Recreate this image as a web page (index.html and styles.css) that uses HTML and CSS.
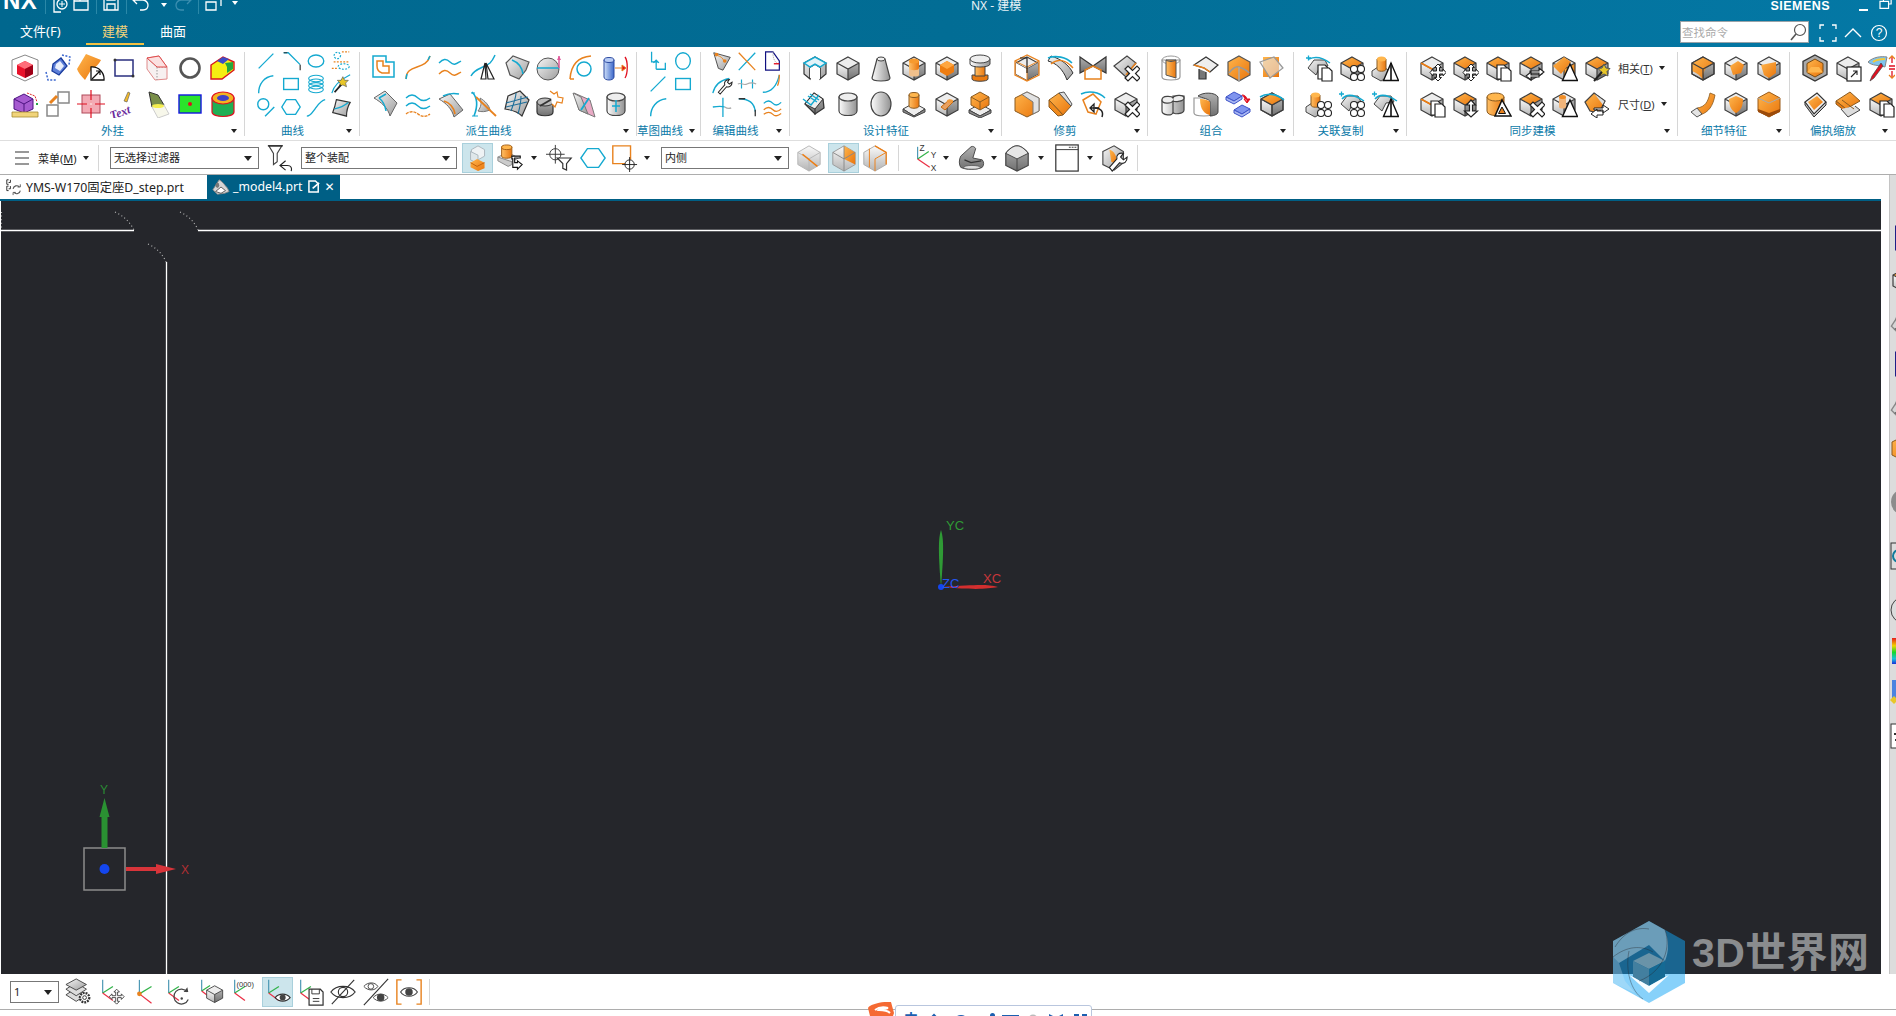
FILE: index.html
```html
<!DOCTYPE html>
<html lang="zh">
<head>
<meta charset="utf-8">
<title>NX - 建模</title>
<link rel="stylesheet" href="styles.css">
</head>
<body>
<svg class="sprite" aria-hidden="true">
<defs>
<linearGradient id="gg" x1="0" y1="0" x2="0" y2="1"><stop offset="0" stop-color="#fafafa"/><stop offset="1" stop-color="#b4b4b4"/></linearGradient>
<linearGradient id="gd" x1="0" y1="0" x2="0" y2="1"><stop offset="0" stop-color="#b0b0b0"/><stop offset="1" stop-color="#707070"/></linearGradient>
<linearGradient id="go" x1="0" y1="0" x2="1" y2="1"><stop offset="0" stop-color="#ffb64d"/><stop offset="1" stop-color="#e9750c"/></linearGradient>
<linearGradient id="gc" x1="0" y1="0" x2="1" y2="0"><stop offset="0" stop-color="#fdfdfd"/><stop offset="1" stop-color="#929292"/></linearGradient>
<linearGradient id="gco" x1="0" y1="0" x2="1" y2="0"><stop offset="0" stop-color="#ffc066"/><stop offset="1" stop-color="#e8760e"/></linearGradient>
<linearGradient id="gb" x1="0" y1="0" x2="1" y2="0"><stop offset="0" stop-color="#cfe0fa"/><stop offset="1" stop-color="#3b67c9"/></linearGradient>
<linearGradient id="gs" x1="0" y1="0" x2="1" y2="1"><stop offset="0" stop-color="#f7f7f7"/><stop offset="1" stop-color="#9c9c9c"/></linearGradient>
<linearGradient id="grb" x1="0" y1="0" x2="0" y2="1"><stop offset="0" stop-color="#e51c1c"/><stop offset=".3" stop-color="#f0d400"/><stop offset=".55" stop-color="#19d829"/><stop offset=".8" stop-color="#19c0e0"/><stop offset="1" stop-color="#1a2fd8"/></linearGradient>

<g id="sd"><polygon points="3,9 14,15 14,26 3,20" fill="url(#gg)"/><polygon points="25,9 14,15 14,26 25,20" fill="url(#gd)"/></g>
<path id="ed" d="M14 3 25 9v11l-11 6L3 20V9zM3 9l11 6 11-6M14 15v11" fill="none" stroke="#3e3e3e" stroke-width="1.2"/>
<g id="c0"><polygon points="14,3 25,9 14,15 3,9" fill="#ededed"/><use href="#sd"/><use href="#ed"/></g>
<g id="co"><polygon points="14,3 25,9 14,15 3,9" fill="url(#go)"/><use href="#sd"/><use href="#ed"/></g>
<g id="ce"><polygon points="14,3 25,9 14,15 3,9" fill="#ededed"/><use href="#sd"/><use href="#ed"/><path d="M3 9l11 6" stroke="#ee7d11" stroke-width="1.8"/></g>
<g id="cf"><polygon points="14,3 25,9 14,15 3,9" fill="#ddd"/><polygon points="3,9 14,15 14,26 3,20" fill="url(#go)"/><polygon points="25,9 14,15 14,26 25,20" fill="url(#gd)"/><use href="#ed"/></g>
<g id="cr"><polygon points="14,3 25,9 14,15 3,9" fill="#e6e6e6"/><polygon points="3,9 14,15 14,26 3,20" fill="url(#gg)"/><polygon points="25,9 14,15 14,26 25,20" fill="url(#go)"/><use href="#ed"/></g>
<g id="cy"><path d="M5 7v14c0 6 18 6 18 0V7z" fill="url(#gc)" stroke="#444" stroke-width="1.2"/><ellipse cx="14" cy="7" rx="9" ry="4" fill="#eee" stroke="#444" stroke-width="1.2"/></g>
<g id="cyo"><path d="M3 7v14c0 6 17 6 17 0V7z" fill="url(#gco)" stroke="#8a5a20"/><ellipse cx="11.500" cy="7" rx="8.500" ry="4" fill="#ffb64d" stroke="#8a5a20"/></g>
<path id="oMove" d="M20 10l3.500 3.500H21.500V17h3.500v-2l3 3.500-3 3.500v-2h-3.500v3.500h2L20 27l-3.500-3.500h2V20H15v2l-3-3.500 3-3.500v2h3.500v-3.500h-2z" fill="#fff" stroke="#222"/>
<g id="oCopy"><path d="M13 11h7l3 3v11H13z" fill="#fff" stroke="#222" stroke-width="1.2"/><path d="M17 14h7l3 3v10H17z" fill="#fff" stroke="#222" stroke-width="1.2"/></g>
<g id="oTri"><path d="M20 10 27.500 26.500H12.500z" fill="#fff" stroke="#111" stroke-width="1.4"/></g>
<g id="oTri2"><path d="M20 9 27.500 26.500H12.500z" fill="#fff" stroke="#111" stroke-width="1.4"/><path d="M20 9v17.500" stroke="#111" stroke-width="1.6"/></g>
<path id="oX" d="M13 15l3-3 4.500 4.500L25 12l3 3-4.500 4.500L28 24l-3 3-4.500-4.500L16 27l-3-3 4.500-4.500z" fill="#fff" stroke="#222" stroke-width="1.2"/>
<g id="oStar"><path d="M21 10l2 4 4 .5-3 3 1 4.500-4-2-4 2 1-4.500-3-3 4-.5z" fill="#e8c628" stroke="#555"/><path d="M11 27l8-9" stroke="#222" stroke-width="2"/></g>
<g id="oUp"><path d="M20 10l4.500 5h-3v6h5L20 27l-6.500-6h5v-6h-3z" fill="#fff" stroke="#222" stroke-width="1.200"/></g>
<g id="o4"><g fill="#fff" stroke="#222" stroke-width="1.100"><circle cx="16" cy="15" r="3.500"/><circle cx="23" cy="15" r="3.500"/><circle cx="16" cy="23" r="3.500"/><circle cx="23" cy="23" r="3.500"/></g></g>
<path id="plus" d="M1 4h5M3.500 1.500v5" stroke="#14a9d0" stroke-width="1.300"/>
<path id="bow" d="M4 9C9 3 17 5 26 11" fill="none" stroke="#14a9d0" stroke-width="1.500"/>
<g id="csys" fill="none" stroke-width="1.300"><path d="M5 2v14" stroke="#4e99b5"/><path d="M5 16l11-7" stroke="#32b34a"/><path d="M5 16l11 8" stroke="#ea2f44"/></g>

<symbol id="p1" viewBox="0 0 28 28"><path d="M14 1 27 6v15l-13 6-13-6V6z" fill="none" stroke="#888"/><path d="M14 7 22 11v9l-8 4-8-4v-9z" fill="#e8122b"/><path d="M14 7 22 11l-8 4-8-4z" fill="#ff6d7a"/><path d="M14 15v9l8-4v-9z" fill="#9e0018"/></symbol>
<symbol id="p2" viewBox="0 0 28 28"><path d="M9 10l8-6 6 8-8 9-7-4z" fill="#5d7fd8" stroke="#183a9c" stroke-width="1.300"/><path d="M12 10l4-3 4 5-4 5-5-3z" fill="#e8eefc"/><path d="M18 1l8 2-1 8M2 18l2 8 8 0" fill="none" stroke="#3d68cf" stroke-width="1.500" stroke-dasharray="2 1.500"/></symbol>
<symbol id="p3" viewBox="0 0 28 28"><path d="M9 0 24 6C21 12 17 14 14 16L8 26C4 22 1 18 0 15z" fill="url(#go)"/><path d="M14 26V13a12 12 0 0 1 13 13z" fill="#fff" stroke="#111" stroke-width="1.300"/><path d="M15 25l8-8M19 17h4v4" fill="none" stroke="#111" stroke-width="1.200"/></symbol>
<symbol id="p4" viewBox="0 0 28 28"><rect x="5" y="6" width="18" height="16" fill="#fff" stroke="#2a2f7f" stroke-width="1.500"/><circle cx="5" cy="6" r="1.500" fill="#333"/><circle cx="23" cy="22" r="1.500" fill="#333"/></symbol>
<symbol id="p5" viewBox="0 0 28 28"><path d="M4 4 16 2l8 11v12L12 26 4 15z" fill="#f7f0f0" stroke="#e08a8a"/><path d="M4 4l10 9h10M14 13v13" fill="none" stroke="#999" stroke-dasharray="1.500 1.500"/><path d="M4 4 16 2l8 11-10 0z" fill="#fbe0e0" stroke="#df4a4a"/></symbol>
<symbol id="p6" viewBox="0 0 28 28"><circle cx="14" cy="14" r="9.500" fill="none" stroke="#555" stroke-width="2.600"/></symbol>
<symbol id="p7" viewBox="0 0 28 28"><path d="M2 11 14 3l11 5v8L13 25H2z" fill="#f5ee12" stroke="#d8141c" stroke-width="1.400"/><path d="M8 7 14 3l6 2-6 5z" fill="#3b4cc8"/><path d="M16 9l8-1v7l-6 4v-6z" fill="#23a83e"/></symbol>
<symbol id="p8" viewBox="0 0 28 28"><path d="M3 9 13 4l9 5v10l-9 4-10-4z" fill="#a65bd0" stroke="#4c1480"/><path d="M3 9l10 5 9-5M13 14v9" fill="none" stroke="#4c1480"/><path d="M1 22h26v5H1z" fill="#f1d47a" stroke="#a68b30" stroke-width=".8"/><path d="M16 3l8 3 2 6" fill="none" stroke="#e02b2b" stroke-dasharray="2 1"/><path d="M25 13l2 2m0-2-2 2" stroke="#28a745"/></symbol>
<symbol id="p9" viewBox="0 0 28 28"><rect x="14" y="2" width="11" height="11" fill="#fff" stroke="#888" stroke-width="1.500"/><rect x="3" y="15" width="11" height="11" fill="#fff" stroke="#888" stroke-width="1.500"/><path d="M6 13l7-7" stroke="#e8821e" stroke-width="3"/></symbol>
<symbol id="p10" viewBox="0 0 28 28"><rect x="5" y="5" width="18" height="18" fill="#f3aab4" stroke="#b04a5a"/><path d="M14 0v28M0 14h28" stroke="#e01020" stroke-width="1.200"/><path d="M14 10v8M10 14h8" stroke="#fff"/></symbol>
<symbol id="p11" viewBox="0 0 28 28"><text class="svg-tex" x="-1" y="25" transform="rotate(-20 14 20)">Text</text><path d="M14 11l4-9 2 1-3 9z" fill="#f0b92c" stroke="#555" stroke-width=".6"/></symbol>
<symbol id="p12" viewBox="0 0 28 28"><path d="M6 2 15 5 21 15 9 17z" fill="#7a8f4a" stroke="#333"/><path d="M9 17l12-2 5 9-11 4z" fill="#f7f7ea" stroke="#ccc"/><ellipse cx="15" cy="16" rx="6" ry="2" fill="#f5ee50"/></symbol>
<symbol id="p13" viewBox="0 0 28 28"><rect x="3" y="5" width="22" height="18" fill="#2be32b" stroke="#1414e0" stroke-width="1.400"/><circle cx="14" cy="14" r="2" fill="#e01020"/></symbol>
<symbol id="p14" viewBox="0 0 28 28"><path d="M3 8v14c0 6 22 6 22 0V8z" fill="#1faf54" stroke="#e01020" stroke-width="1.200"/><ellipse cx="14" cy="8" rx="11" ry="6" fill="#f3b320" stroke="#e01020" stroke-width="1.200"/><ellipse cx="14" cy="8" rx="6" ry="3" fill="#4040c8"/></symbol>

<symbol id="k1" viewBox="0 0 24 24"><path d="M4 20 20 4" stroke="#14a9d0" stroke-width="1.400"/></symbol>
<symbol id="k2" viewBox="0 0 24 24"><path d="M4 3h5l13 13" fill="none" stroke="#14a9d0" stroke-width="1.400"/><path d="M4 3h4M22 16v6" stroke="#333" stroke-width="1.300"/></symbol>
<symbol id="k3" viewBox="0 0 24 24"><ellipse cx="12" cy="12" rx="8.500" ry="6.500" fill="none" stroke="#14a9d0" stroke-width="1.500"/></symbol>
<symbol id="k4" viewBox="0 0 24 24"><g fill="none" stroke-dasharray="2 1.500" stroke-width="1.300"><circle cx="8" cy="6" r="3.500" stroke="#14a9d0"/><ellipse cx="15" cy="18" rx="6" ry="3" stroke="#14a9d0"/><path d="M4 13h16M13 2h8M2 20h6" stroke="#e8821e"/></g></symbol>
<symbol id="k5" viewBox="0 0 24 24"><path d="M4 22C4 12 10 4 20 3" fill="none" stroke="#14a9d0" stroke-width="1.500"/></symbol>
<symbol id="k6" viewBox="0 0 24 24"><rect x="4" y="6" width="16" height="12" fill="none" stroke="#14a9d0" stroke-width="1.500"/></symbol>
<symbol id="k7" viewBox="0 0 24 24"><g fill="none" stroke="#14a9d0" stroke-width="1.200"><ellipse cx="12" cy="6" rx="8" ry="3.500"/><ellipse cx="12" cy="10" rx="8" ry="3.500"/><ellipse cx="12" cy="14" rx="8" ry="3.500"/><ellipse cx="12" cy="18" rx="8" ry="3.500"/></g></symbol>
<symbol id="k8" viewBox="0 0 24 24"><path d="M2 22c2-8 8-14 20-20" fill="none" stroke="#14a9d0" stroke-width="1.300"/><path d="M14 4l2 4 4 0-3 3 1 4-4-2-4 2 1-4-3-3 4 0z" fill="#e8c628" stroke="#555" stroke-width=".7"/><path d="M5 21l7-8" stroke="#222" stroke-width="2"/></symbol>
<symbol id="k9" viewBox="0 0 24 24"><circle cx="9" cy="9" r="6" fill="none" stroke="#14a9d0" stroke-width="1.500"/><path d="M11 22 21 12" stroke="#14a9d0" stroke-width="1.500"/></symbol>
<symbol id="k10" viewBox="0 0 24 24"><path d="M7 4h10l5 8-5 8H7l-5-8z" fill="none" stroke="#14a9d0" stroke-width="1.500"/></symbol>
<symbol id="k11" viewBox="0 0 24 24"><path d="M2 22c4 0 6-4 9-8s6-9 11-10" fill="none" stroke="#14a9d0" stroke-width="1.500"/></symbol>
<symbol id="k12" viewBox="0 0 24 24"><path d="M7 4l15 3c-3 5-4 9-4 15L3 18C5 13 6 9 7 4z" fill="url(#gs)" stroke="#333" stroke-width="1.300"/><path d="M5 14c5-1 10-3 15-7" fill="none" stroke="#14a9d0" stroke-width="1.500"/></symbol>

<symbol id="d1" viewBox="0 0 28 28"><path d="M2 2h13l0 6 8 0v15H2z" fill="none" stroke="#14a9d0" stroke-width="1.500"/><path d="M6 7h6v5l6 0v7H11c-3-1-5-3-5-7z" fill="none" stroke="#e8821e" stroke-width="1.500"/></symbol>
<symbol id="d2" viewBox="0 0 28 28"><path d="M2 25c0-8 5-10 11-12S24 9 26 2" fill="none" stroke="#e8821e" stroke-width="1.500"/><path d="M2 25 3 20" stroke="#14a9d0" stroke-width="1.500"/><path d="M24 6l2-4" stroke="#14a9d0" stroke-width="1.500"/></symbol>
<symbol id="d3" viewBox="0 0 28 28"><path d="M2 9c4-4 7-5 11-1s6 2 11-1" fill="none" stroke="#14a9d0" stroke-width="1.400"/><path d="M2 20c4-4 7-5 11-1s6 2 11-1" fill="none" stroke="#e8821e" stroke-width="1.400"/></symbol>
<symbol id="d4" viewBox="0 0 28 28"><path d="M1 22C5 14 14 14 20 9 23 6 24 3 25 1" fill="none" stroke="#14a9d0" stroke-width="1.500"/><path d="M11 25 15 9l1 16zM16 9l8 16h-6z" fill="#fff" stroke="#222" stroke-width="1.200"/></symbol>
<symbol id="d5" viewBox="0 0 28 28"><path d="M3 9 10 2l16 6-3 8-7 9L7 21z" fill="url(#gs)" stroke="#555" stroke-width="1.200"/><path d="M9 6c5 2 10 7 11 14" fill="none" stroke="#14a9d0" stroke-width="1.600"/></symbol>
<symbol id="d6" viewBox="0 0 28 28"><circle cx="12" cy="15" r="11" fill="url(#gs)" stroke="#555"/><path d="M1 14h22" stroke="#14a9d0" stroke-width="1.500"/><path d="M23 2v12" stroke="#e0589a" stroke-width="1.500"/><path d="M21 6l2-4 2 4z" fill="#e0589a"/></symbol>
<symbol id="d7" viewBox="0 0 28 28"><path d="M1 25C2 11 9 3 22 2" fill="none" stroke="#e8821e" stroke-width="1.500"/><path d="M1 25h4" stroke="#e8821e" stroke-width="1.500"/><circle cx="15" cy="15" r="7" fill="none" stroke="#14a9d0" stroke-width="1.500"/></symbol>
<symbol id="d8" viewBox="0 0 28 28"><path d="M2 6v17c0 4 10 4 10 0V6z" fill="url(#gb)" stroke="#2c4aa0"/><ellipse cx="7" cy="6" rx="5" ry="2.500" fill="#b7ccf5" stroke="#2c4aa0"/><path d="M13 14h7M20 11l4 3-4 3z" stroke="#e8821e" fill="#e01020"/><path d="M23 3c3 4 3 16 0 21" fill="none" stroke="#e01020" stroke-width="1.300"/></symbol>
<symbol id="d9" viewBox="0 0 28 28"><path d="M3 8 14 1l12 12-7 13C17 18 10 12 3 8z" fill="url(#gs)" stroke="#666"/><path d="M8 8l7-4M8 8c4 3 6 7 7 13" fill="none" stroke="#14a9d0" stroke-width="1.500"/></symbol>
<symbol id="d10" viewBox="0 0 28 28"><path d="M2 8c4-4 8-4 12 0s8 3 12 0" fill="none" stroke="#14a9d0" stroke-width="1.400"/><path d="M2 16c4-4 8-4 12 0s8 3 12 0" fill="none" stroke="#14a9d0" stroke-width="1.400"/><path d="M2 24c4-3 8-3 12 0s8 3 12 0" fill="none" stroke="#e8821e" stroke-width="1.400" stroke-dasharray="3 1"/></symbol>
<symbol id="d11" viewBox="0 0 28 28"><path d="M2 9l11-5 13 16-9 7C15 19 9 13 2 9z" fill="url(#gs)" stroke="#666"/><path d="M6 6C12 3 17 3 22 4" fill="none" stroke="#14a9d0" stroke-width="1.500"/><path d="M7 11c6 2 10 7 11 13" fill="none" stroke="#e8821e" stroke-width="1.800"/></symbol>
<symbol id="d12" viewBox="0 0 28 28"><path d="M10 8c5 3 9 7 10 12-5 2-8 2-12 1 3-4 4-8 2-13z" fill="url(#gs)" stroke="#777"/><path d="M2 2c6 6 6 14 2 24" fill="none" stroke="#14a9d0" stroke-width="1.600"/><path d="M1 3h4M2 26h6" stroke="#14a9d0"/><path d="M6 7 26 26" stroke="#e8821e" stroke-width="1.800"/></symbol>
<symbol id="d13" viewBox="0 0 28 28"><path d="M5 6 17 1l9 9-7 16C15 22 9 20 2 19z" fill="url(#gs)" stroke="#333" stroke-width="1.200"/><path d="M3 13 25 7M8 21C11 13 13 7 13 3M15 24c2-7 3-12 3-18M3 17l21-5" fill="none" stroke="#1d6e99" stroke-width="1.100"/></symbol>
<symbol id="d14" viewBox="0 0 28 28"><path d="M1 12v10c0 5 16 5 16 0V12z" fill="url(#gd)" stroke="#333" stroke-width="1.200"/><ellipse cx="9" cy="12" rx="8" ry="4" fill="#bbb" stroke="#333"/><path d="M4 16 16 9" stroke="#333" stroke-width="2"/><path d="M14 1l4 3 3-2 1 5 5 1-1 5-5-1-2 5-3-3" fill="#fff" stroke="#e8821e" stroke-width="1.200"/></symbol>
<symbol id="d15" viewBox="0 0 28 28"><path d="M5 3 21 10l5 17L10 20z" fill="#e9aac5" stroke="#777"/><path d="M4 3l8 4 7 17-9-4z" fill="url(#gs)" stroke="#777"/><path d="M20 8l-8 12" stroke="#14a9d0" stroke-width="1.800"/></symbol>
<symbol id="d16" viewBox="0 0 28 28"><use href="#cy"/><path d="M14 10v12M10 16h8" stroke="#14a9d0" stroke-width="1.500"/></symbol>

<symbol id="e1" viewBox="0 0 24 24"><path d="M5 2v11h7" fill="none" stroke="#14a9d0" stroke-width="1.400"/><path d="M10 21V11M7 14l3-3 3 3" fill="none" stroke="#14a9d0" stroke-width="1.400"/><path d="M10 21h10V14" fill="none" stroke="#14a9d0" stroke-width="1.400"/></symbol>
<symbol id="e2" viewBox="0 0 24 24"><ellipse cx="12" cy="12" rx="8" ry="9" fill="none" stroke="#14a9d0" stroke-width="1.500"/></symbol>
<symbol id="e4" viewBox="0 0 24 24"><path d="M4 22c0-9 6-18 17-19" fill="none" stroke="#14a9d0" stroke-width="1.500"/></symbol>
<symbol id="f1" viewBox="0 0 24 24"><path d="M3 3 21 8 13 22 8 20z" fill="url(#gs)" stroke="#444"/><path d="M7 6c4 1 6 3 7 6" fill="none" stroke="#e8821e"/><circle cx="6" cy="5" r="2" fill="#e8821e"/><circle cx="15" cy="12" r="2" fill="#e8821e"/></symbol>
<symbol id="f2" viewBox="0 0 24 24"><path d="M3 22 21 3" stroke="#14a9d0" stroke-width="1.400"/><path d="M3 3l18 19" stroke="#e8821e" stroke-width="1.400"/></symbol>
<symbol id="f3" viewBox="0 0 24 24"><path d="M5 2h8l7 10v10H5z" fill="#fff" stroke="#101080" stroke-width="1.300"/><path d="M13 2c0 6 1 10 5 13" fill="none" stroke="#aaa" stroke-dasharray="1.500 1"/><path d="M14 15h6" stroke="#e01020" stroke-width="1.500"/></symbol>
<symbol id="f4" viewBox="0 0 24 24"><path d="M2 22C4 13 9 8 20 6" fill="none" stroke="#14a9d0" stroke-width="1.400"/><path d="M8 21l7-8c-1-3 1-6 5-6l-2 3 2 2 3-2c0 4-3 6-6 5l-7 8z" fill="#fff" stroke="#222" stroke-width="1.100"/></symbol>
<symbol id="f5" viewBox="0 0 24 24"><path d="M6 7v10M18 7v10" stroke="#14a9d0" stroke-width="1.300"/><path d="M2 12c4-2 6 2 10 0s6-2 10 0" fill="none" stroke="#aaa" stroke-width="1.200"/></symbol>
<symbol id="f6" viewBox="0 0 24 24"><path d="M2 21c9 0 15-6 18-19" fill="none" stroke="#14a9d0" stroke-width="1.400"/><path d="M20 2c0 6-1 10-2 12" fill="none" stroke="#e8821e" stroke-width="1.400"/></symbol>
<symbol id="f7" viewBox="0 0 24 24"><path d="M13 2v21" stroke="#14a9d0" stroke-width="1.400"/><path d="M2 12c6-1 10-1 13 0" fill="none" stroke="#14a9d0" stroke-width="1.400"/><path d="M15 12c3 2 5 2 7 1" fill="none" stroke="#aaa" stroke-width="1.400"/></symbol>
<symbol id="f8" viewBox="0 0 24 24"><path d="M3 3c10 0 17 4 18 14" fill="none" stroke="#14a9d0" stroke-width="1.400"/><path d="M3 3h7M21 15v7" stroke="#333" stroke-width="1.400"/></symbol>
<symbol id="f9" viewBox="0 0 24 24"><path d="M3 8c4-4 7-3 10 0s6 2 9-1" fill="none" stroke="#14a9d0" stroke-width="1.400"/><path d="M3 15c4-4 7-3 10 0s6 2 9-1M3 20c4-3 7-3 10 0s6 1 9-1" fill="none" stroke="#e8821e" stroke-width="1.400"/></symbol>

<symbol id="g1" viewBox="0 0 28 28"><path d="M3 9 14 3l11 6v11l-6 5V14l-5-3-5 3v11l-6-5z" fill="url(#gs)" stroke="#333" stroke-width="1.200"/><path d="M9 14v11M19 14v11" fill="none" stroke="#333"/><path d="M9 14v10l10 1V14l-5-3z" fill="#fff"/><path d="M3 9l6 4 5-3 5 3 6-4-11-6z" fill="#e3f3f8" stroke="#14a9d0" stroke-width="1.500"/></symbol>
<symbol id="g2" viewBox="0 0 28 28"><use href="#c0"/></symbol>
<symbol id="g3" viewBox="0 0 28 28"><path d="M10 5 5 24c0 4 18 4 18 0L18 5z" fill="url(#gc)" stroke="#444" stroke-width="1.200"/><ellipse cx="14" cy="5" rx="4" ry="2" fill="#eee" stroke="#444"/></symbol>
<symbol id="g4" viewBox="0 0 28 28"><use href="#c0"/><path d="M9 11v10c0 2 10 2 10 0V11z" fill="#f0c08c"/><path d="M9 7v7c0 3 10 3 10 0V7z" fill="url(#gco)"/><ellipse cx="14" cy="7" rx="5" ry="2.500" fill="#f79a2e"/></symbol>
<symbol id="g5" viewBox="0 0 28 28"><use href="#c0"/><path d="M14 7 21 11v7l-7 4-7-4v-7z" fill="#ee7d11"/><path d="M7 11l7 4 7-4-7-4z" fill="#ffa640"/></symbol>
<symbol id="g6" viewBox="0 0 28 28"><path d="M6 21h16v4c0 3-16 3-16 0z" fill="#ea7a10" stroke="#444"/><path d="M9 10h10v12H9z" fill="url(#gco)" stroke="#444"/><path d="M4 5v5c0 4 20 4 20 0V5z" fill="url(#gc)" stroke="#444"/><ellipse cx="14" cy="5" rx="10" ry="4" fill="#eee" stroke="#444"/></symbol>
<symbol id="g7" viewBox="0 0 28 28"><path d="M4 14 14 24l9-6-1-9L13 3z" fill="url(#gd)" stroke="#333" stroke-width="1.300"/><path d="M4 14 13 3l9 6L14 19z" fill="#eee" stroke="#333"/><path d="M14 19v6" stroke="#333"/><path d="M2 9l8 6 8-10M7 6l9 6M9 4l9 6" fill="none" stroke="#14a9d0" stroke-width="1.400"/></symbol>
<symbol id="g8" viewBox="0 0 28 28"><use href="#cy"/></symbol>
<symbol id="g9" viewBox="0 0 28 28"><ellipse cx="14" cy="14" rx="10" ry="12" fill="url(#gc)" stroke="#444" stroke-width="1.200"/></symbol>
<symbol id="g10" viewBox="0 0 28 28"><path d="M14 13 25 19l-11 7-11-7z" fill="#eee" stroke="#444"/><path d="M3 19v3l11 5 11-5v-3l-11 7z" fill="#888" stroke="#444"/><path d="M9 5v11c0 3 10 3 10 0V5z" fill="url(#gco)" stroke="#8a5a20"/><ellipse cx="14" cy="5" rx="5" ry="2.500" fill="#ffb64d" stroke="#8a5a20"/></symbol>
<symbol id="g11" viewBox="0 0 28 28"><use href="#c0"/><path d="M8 17l8-7 4 2-8 8z" fill="#e8a060" stroke="#c66a10"/><ellipse cx="17" cy="11" rx="3" ry="1.800" fill="#f29a3a"/></symbol>
<symbol id="g12" viewBox="0 0 28 28"><path d="M14 14 25 20l-11 6-11-6z" fill="#eee" stroke="#444"/><path d="M3 20v3l11 5 11-5v-3l-11 6z" fill="#8a8a8a" stroke="#444"/><path d="M14 2 23 7v8l-9 5-9-5V7z" fill="url(#go)" stroke="#8a5a20"/><path d="M5 7l9 5 9-5M14 12v8" fill="none" stroke="#8a5a20"/></symbol>

<symbol id="h1" viewBox="0 0 28 28"><use href="#c0"/><polygon points="25,9 14,15 14,26 25,20" fill="url(#gd)"/><polygon points="3,9 14,15 14,26 3,20" fill="#fff"/><path d="M14 1 2 7v14l12 6 12-6V7z" fill="none" stroke="#e8821e" stroke-width="1.300"/><path d="M2 7l12 6 12-6M14 13v14" fill="none" stroke="#e8821e"/><path d="M7 4h7v15" fill="none" stroke="#222" stroke-width="1.200"/></symbol>
<symbol id="h2" viewBox="0 0 28 28"><path d="M2 7c8 2 15 8 19 19l6-7C23 11 15 5 5 2z" fill="url(#gs)" stroke="#333"/><path d="M5 10C12 4 20 6 27 14" fill="none" stroke="#e8821e" stroke-width="1.400"/><path d="M2 4c8-3 18-1 24 5" fill="none" stroke="#14a9d0" stroke-width="1.600"/></symbol>
<symbol id="h3" viewBox="0 0 28 28"><path d="M1 3 14 12 27 3v16l-13-7L1 19z" fill="url(#gd)" stroke="#333" stroke-width="1.200"/><path d="M14 12l8 4v9H6v-9z" fill="none" stroke="#e8821e" stroke-width="1.500"/></symbol>
<symbol id="h4" viewBox="0 0 28 28"><path d="M2 12 15 2l9 7-6 7-3 8z" fill="url(#gs)" stroke="#444" stroke-width="1.200"/><path d="M14 21 24 9" stroke="#e8821e" stroke-width="1.600"/><use href="#oX"/></symbol>
<symbol id="h5" viewBox="0 0 28 28"><path d="M14 2 26 8v13l-12 6L2 21V8z" fill="url(#go)" stroke="#8a5a20"/><path d="M14 2 26 8v13l-6 3V12L9 4.500z" fill="#e2e2e2" stroke="#777"/></symbol>
<symbol id="h6" viewBox="0 0 28 28"><path d="M3 10 13 3l12 13-8 9z" fill="url(#go)" stroke="#8a5a20"/><path d="M13 3l5-1 8 12-1 2z" fill="#ddd" stroke="#555"/><path d="M3 10l14 15-5 1-9-9z" fill="#f08a1c" stroke="#8a5a20"/></symbol>
<symbol id="h7" viewBox="0 0 28 28"><path d="M2 4C10 0 20 2 26 8" fill="none" stroke="#14a9d0" stroke-width="1.500"/><path d="M4 10 14 4l8 8-5 12-8-2z" fill="#fff" stroke="#e8821e" stroke-width="1.500"/><path d="M11 18h9M11 18l4-4v8z" fill="#fff" stroke="#222" stroke-width="1.300"/><path d="M16 18c5 0 9 3 7 9" fill="none" stroke="#222" stroke-width="1.500"/></symbol>
<symbol id="h8" viewBox="0 0 28 28"><use href="#c0"/><use href="#oX"/></symbol>

<symbol id="j1" viewBox="0 0 28 28"><path d="M3 6v17c0 4 18 4 18 0V6z" fill="none" stroke="#999" stroke-width="1.200"/><ellipse cx="12" cy="6" rx="9" ry="4" fill="none" stroke="#999"/><path d="M7 6v15l10 3V6z" fill="url(#gco)" stroke="#555"/><path d="M7 6c3 2 7 2 10 0" fill="none" stroke="#555"/></symbol>
<symbol id="j2" viewBox="0 0 28 28"><path d="M2 11 14 3l12 8-8 7-6-4z" fill="#eee" stroke="#333" stroke-width="1.200"/><path d="M7 15v10l7 0v-7" fill="#777" stroke="#333" stroke-width="1.200"/><path d="M2 11l10 3 6 4" fill="none" stroke="#e8821e" stroke-width="1.500"/></symbol>
<symbol id="j3" viewBox="0 0 28 28"><path d="M14 2 25 8v13l-11 6L3 21V8z" fill="url(#go)" stroke="#555" stroke-width="1.200"/><path d="M4 19c4-5 7-7 10-6s8 3 10 6" fill="none" stroke="#999" stroke-width="1.500"/><path d="M14 13v14" stroke="#aaa" stroke-width="1.500"/></symbol>
<symbol id="j4" viewBox="0 0 28 28"><path d="M5 3h16v20H5z" fill="url(#go)"/><path d="M2 8l14-5 9 11-13 10z" fill="#e9e9e9" fill-opacity=".6" stroke="#999" stroke-width="1.200"/></symbol>
<symbol id="j5" viewBox="0 0 28 28"><path d="M3 10v11c0 4 11 6 11 1V10zM14 6v16c0 3 11 2 11-2V6z" fill="url(#gc)" stroke="#444" stroke-width="1.200"/><path d="M3 10C3 5 13 6 14 8c1-3 11-4 11 0s-11 4-11 3C12 14 3 14 3 10z" fill="#eee" stroke="#444" stroke-width="1.200"/></symbol>
<symbol id="j6" viewBox="0 0 28 28"><path d="M2 8v15c0 4 20 4 20 0V8z" fill="none" stroke="#999" stroke-width="1.200"/><path d="M6 6c5-4 17-4 20 1v15c0 3-6 4-8 4V12C18 9 10 8 6 6z" fill="url(#gd)" stroke="#444"/><path d="M8 9c4 0 10 1 10 4v12C13 24 8 20 8 9z" fill="url(#go)"/></symbol>
<symbol id="j7" viewBox="0 0 28 28"><g stroke="#3c52c8" fill="#7f94ee"><path d="M1 7 9 2l8 4-8 5z"/><path d="M1 7v3l8 4 8-5V6l-8 5z" fill="#a9b7f2"/><path d="M9 20l8-5 8 4-8 5z"/><path d="M9 20v3l8 4 8-5v-3l-8 5z" fill="#a9b7f2"/></g><path d="M17 5c4 0 5 3 5 7M19 9l3 4 3-4z" fill="#e01020" stroke="#e01020"/></symbol>
<symbol id="j8" viewBox="0 0 28 28"><use href="#c0"/><polygon points="14,3 25,9 14,15 3,9" fill="url(#go)"/><use href="#ed"/><path d="M2 7c6-4 16-4 24 3" fill="none" stroke="#14a9d0" stroke-width="1.600"/></symbol>

<symbol id="l1" viewBox="0 0 28 28"><path d="M3 14 9 6l11 0 3 6-8 1-4 8z" fill="url(#gs)" stroke="#444"/><use href="#plus"/><path d="M4 5c7-3 13-2 21 4" fill="none" stroke="#14a9d0" stroke-width="1.400"/><use href="#oCopy"/></symbol>
<symbol id="l2" viewBox="0 0 28 28"><use href="#co"/><use href="#o4"/></symbol>
<symbol id="l3" viewBox="0 0 28 28"><path d="M1 17 10 11l7 5v7l-7 4-9-5z" fill="url(#gs)" stroke="#444"/><path d="M6 5v10c0 3 9 3 9 0V5z" fill="url(#gco)" stroke="#8a5a20"/><ellipse cx="10.500" cy="5" rx="4.500" ry="2.500" fill="#ffb64d"/><use href="#oTri2"/></symbol>
<symbol id="l4" viewBox="0 0 28 28"><path d="M1 17 10 11l7 5v7l-7 4-9-5z" fill="url(#gs)" stroke="#444"/><path d="M6 5v10c0 3 9 3 9 0V5z" fill="url(#gco)" stroke="#8a5a20"/><ellipse cx="10.500" cy="5" rx="4.500" ry="2.500" fill="#ffb64d"/><use href="#o4"/></symbol>
<symbol id="l5" viewBox="0 0 28 28"><path d="M3 14 9 6l11 0 3 6-8 1-4 8z" fill="url(#gs)" stroke="#444"/><use href="#plus"/><use href="#bow"/><use href="#o4"/></symbol>
<symbol id="l6" viewBox="0 0 28 28"><path d="M3 14 9 6l11 0 3 6-8 1-4 8z" fill="url(#gs)" stroke="#444"/><use href="#plus"/><use href="#bow"/><use href="#oTri2"/></symbol>

<symbol id="m1" viewBox="0 0 28 28"><use href="#ce"/><use href="#oMove"/></symbol>
<symbol id="m2" viewBox="0 0 28 28"><use href="#co"/><use href="#oMove"/></symbol>
<symbol id="m3" viewBox="0 0 28 28"><use href="#co"/><use href="#oCopy"/></symbol>
<symbol id="m4" viewBox="0 0 28 28"><use href="#co"/><path d="M13 17h9v-3l5 4-5 4v-3h-9zM22 21h-8v-3l-5 4 5 4v-3h8z" fill="#fff" stroke="#222" stroke-width="1.100"/></symbol>
<symbol id="m5" viewBox="0 0 28 28"><use href="#cr"/><path d="M3 12 14 3l7 5-10 12z" fill="url(#go)"/><use href="#oTri"/></symbol>
<symbol id="m6" viewBox="0 0 28 28"><use href="#co"/><use href="#oStar"/></symbol>
<symbol id="m7" viewBox="0 0 28 28"><use href="#ce"/><use href="#oCopy"/></symbol>
<symbol id="m8" viewBox="0 0 28 28"><use href="#co"/><use href="#oUp"/></symbol>
<symbol id="m9" viewBox="0 0 28 28"><use href="#cyo"/><path d="M18 10 27 26H11z" fill="#fff" stroke="#111" stroke-width="1.500"/><path d="M18 17l3.500 6.500h-7z" fill="#e8821e" stroke="#111"/></symbol>
<symbol id="m10" viewBox="0 0 28 28"><use href="#co"/><use href="#oX"/></symbol>
<symbol id="m11" viewBox="0 0 28 28"><use href="#c0"/><path d="M9 7v10c0 2 7 2 7 0V7z" fill="#f0b47a"/><ellipse cx="12.500" cy="7" rx="3.500" ry="2" fill="#f08c24"/><use href="#oTri"/></symbol>
<symbol id="m12" viewBox="0 0 28 28"><path d="M2 12 11 3l11 8-6 12-9-2z" fill="url(#go)" stroke="#444" stroke-width="1.200"/><path d="M11 3l11 8-2 4" fill="#ddd" stroke="#444"/><path d="M11 18h9v-3l6 4-6 4v-3h-9zM20 21h-6v-2l-6 5 6 4v-3h6z" fill="#fff" stroke="#222"/></symbol>

<symbol id="n1" viewBox="0 0 28 28"><use href="#c0"/><path d="M3 9l11-6 11 6-7 4c-3 3-4 7-4 13-2-4-6-7-11-9z" fill="url(#go)"/><use href="#ed"/></symbol>
<symbol id="n2" viewBox="0 0 28 28"><use href="#c0"/><path d="M8 12 16 7l6 4-3 8-8 2z" fill="url(#go)"/></symbol>
<symbol id="n3" viewBox="0 0 28 28"><use href="#c0"/><path d="M6 11 21 8v11l-7 5-5-3z" fill="url(#go)"/></symbol>
<symbol id="n4" viewBox="0 0 28 28"><path d="M8 18c8-1 11-6 13-15l5 2c-2 11-6 17-15 20z" fill="url(#go)" stroke="#8a5a20" stroke-width=".8"/><path d="M2 22 8 18l5 6-5 3z" fill="#e4e4e4" stroke="#555"/></symbol>
<symbol id="n5" viewBox="0 0 28 28"><use href="#c0"/><path d="M7 9l7-3 7 3c0 8-3 12-7 14-4-2-7-6-7-14z" fill="url(#go)"/></symbol>
<symbol id="n6" viewBox="0 0 28 28"><path d="M14 2 25 8v13l-11 6L3 21V8z" fill="url(#go)" stroke="#9a5a18"/><path d="M3 8l11 5 11-5" fill="none" stroke="#aaa"/><path d="M3 19l11 4 11-4v3l-11 5-11-5z" fill="#9c4b0a"/></symbol>
<symbol id="q1" viewBox="0 0 28 28"><path d="M14 1 26 7.500v13L14 27 2 20.500v-13z" fill="#aaa" stroke="#333" stroke-width="1.300"/><path d="M14 5 22 9.500v9L14 23 6 18.500v-9z" fill="url(#go)" stroke="#7a4a10"/><path d="M6 18.500 10 13h8l4 5.500" fill="#ffb64d"/></symbol>
<symbol id="q2" viewBox="0 0 28 28"><use href="#c0"/><rect x="13" y="13" width="14" height="14" fill="#fff" stroke="#222" stroke-width="1.200"/><path d="M17 23l6-6M19 17h4v4" fill="none" stroke="#222" stroke-width="1.100"/></symbol>
<symbol id="q3" viewBox="0 0 28 28"><path d="M1 8C6 3 14 2 20 3l-2 10C12 11 5 12 1 8z" fill="#7fc4ee" stroke="#888"/><path d="M6 8c4-3 8-3 12-3" fill="none" stroke="#f0c93c" stroke-width="2"/><path d="M14 9 5 22l-2 5 4-3 9-12z" fill="#e01020" stroke="#444" stroke-width=".7"/><path d="M25 2v7M25 17v7M22 12h6M22 15h6" stroke="#e01020" stroke-width="1.300"/><path d="M22 5l3-3 3 3M22 21l3 3 3-3" fill="none" stroke="#e8821e" stroke-width="1.300"/></symbol>
<symbol id="q4" viewBox="0 0 28 28"><path d="M4 12 16 3l9 9-12 12z" fill="#eee" stroke="#333" stroke-width="1.200"/><path d="M7 12l9-6 6 6-9 8z" fill="url(#go)"/><path d="M4 12v3l9 12 12-12v-3L13 24z" fill="#bbb" stroke="#333"/></symbol>
<symbol id="q5" viewBox="0 0 28 28"><path d="M2 11 16 2l10 9-14 8z" fill="url(#go)" stroke="#8a5a20"/><path d="M2 11l10 8v3L2 14z" fill="#ea7a10" stroke="#8a5a20"/><path d="M7 19l7 8 12-7-5-4" fill="#ddd" stroke="#444"/><path d="M8 10l12 9" stroke="#8a5a20"/></symbol>

<symbol id="t1" viewBox="0 0 30 30"><path d="M3 2h14l-5 8v9l-4 3V10z" fill="#fff" stroke="#444" stroke-width="1.200"/><path d="M2 2h16" stroke="#222" stroke-width="1.300"/><path d="M21 18l-6 5 6 5" fill="none" stroke="#222" stroke-width="1.200"/><path d="M15 23h8c4 0 5 3 4 6" fill="none" stroke="#222" stroke-width="1.200"/></symbol>
<symbol id="t2" viewBox="0 0 30 30"><g fill="#eef2f4" stroke="#a9b5bb"><path d="M15 2l7 4v7l-7 4-7-4V6z"/><path d="M7 8l8 4v9l-8-4z" fill="#dfe7ea"/></g><path d="M14 16l8 4v6l-7 3-8-4v-5z" fill="url(#go)"/><path d="M7 20l7 4 8-4" fill="none" stroke="#c05f0a"/></symbol>
<symbol id="t3" viewBox="0 0 30 30"><path d="M2 14 13 9l11 6-11 6z" fill="#e8e8e8" stroke="#888"/><path d="M2 14v4l11 6 4-2v-3z" fill="#ccc" stroke="#888"/><path d="M6 3v10c0 3 11 3 11 0V3z" fill="url(#gco)" stroke="#a05c14"/><ellipse cx="11.500" cy="3.500" rx="5.500" ry="2.500" fill="#ffb64d" stroke="#a05c14"/><path d="M17 13h9v2h-6v5h3v-2l5 4-5 5v-2h-5v-9h-1z" fill="#fff" stroke="#111" stroke-width="1.200"/></symbol>
<symbol id="t4" viewBox="0 0 30 30"><circle cx="10" cy="11" r="6" fill="none" stroke="#333"/><path d="M10 1v20M0 11h20" stroke="#333"/><path d="M12 15h15l-5 6v7l-4-2v-5z" fill="#fff" stroke="#333" stroke-width="1.300"/></symbol>
<symbol id="t5" viewBox="0 0 30 30"><path d="M9 5h12l7 10-7 10H9L2 15z" fill="none" stroke="#14a9d0" stroke-width="1.500"/></symbol>
<symbol id="t6" viewBox="0 0 30 30"><path d="M20 21H3V2h19v15" fill="none" stroke="#e8821e" stroke-width="1.500"/><circle cx="21" cy="22" r="5" fill="#fff" stroke="#222"/><path d="M21 14v16M13 22h16" stroke="#222"/></symbol>
<symbol id="t7" viewBox="0 0 30 30"><path d="M15 2 27 9v13l-12 7L3 22V9z" fill="url(#gg)" stroke="#b5b5b5"/><path d="M3 9l12 7 12-7M15 16v13" fill="none" stroke="#b5b5b5"/><path d="M8 11l16 13" stroke="#ee7d11" stroke-width="1.600"/></symbol>
<symbol id="t8" viewBox="0 0 30 30"><path d="M15 2 27 9v13l-12 7L3 22V9z" fill="url(#gg)" stroke="#999"/><path d="M15 2 27 9v13l-12-6z" fill="url(#go)"/><path d="M3 9l12 7 12-7M15 16v13M15 2v14" fill="none" stroke="#888"/></symbol>
<symbol id="t9" viewBox="0 0 30 30"><path d="M15 2 27 9v13l-12 7L3 22V9z" fill="url(#gg)" stroke="#aaa"/><path d="M15 2 27 9v13" fill="none" stroke="#ee7d11" stroke-width="1.300"/><path d="M9 5v20M15 16l12-7M15 16v13" fill="none" stroke="#ee7d11"/></symbol>
<symbol id="t10" viewBox="0 0 30 30"><path d="M6 3v13" stroke="#4e99b5" stroke-width="1.300"/><path d="M6 16l12-8" stroke="#32b34a" stroke-width="1.300"/><path d="M6 16l13 9" stroke="#ea2f44" stroke-width="1.300"/><text class="svg-lab" x="8" y="8">Z</text><text class="svg-lab" x="20" y="15">Y</text><text class="svg-lab" x="20" y="29">X</text></symbol>
<symbol id="t11" viewBox="0 0 30 30"><path d="M4 25c-2-3-2-8 0-12L15 3c2-1 4 0 5 2l-3 10 10 2c2 2 2 6 0 8-6 3-17 3-23 0z" fill="url(#gd)" stroke="#444"/><path d="M8 17l7 3 11-2" fill="none" stroke="#333" stroke-width="1.300"/><ellipse cx="16" cy="25" rx="9" ry="2" fill="#ddd" stroke="#555" stroke-width=".8"/></symbol>
<symbol id="t12" viewBox="0 0 30 30"><path d="M3 10C7 5 11 2 15 2s8 3 12 8v13l-12 6-12-6z" fill="url(#gd)" stroke="#444" stroke-width="1.300"/><path d="M3 10C7 5 11 2 15 2s8 3 12 8l-12 6z" fill="#e6e6e6" stroke="#444"/><path d="M15 16v13" stroke="#444"/></symbol>
<symbol id="t13" viewBox="0 0 30 30"><rect x="3" y="1" width="24" height="28" fill="#fff" stroke="#333" stroke-width="1.300"/><path d="M3 6h24" stroke="#333"/><path d="M17 3.500h2M20 3.500h2M23 3.500h2" stroke="#333"/></symbol>
<symbol id="t14" viewBox="0 0 30 30"><path d="M2 8 14 2l10 6v12l-10 8L2 22z" fill="url(#gs)" stroke="#444" stroke-width="1.200"/><path d="M9 6c5 2 8 6 8 16l-6-3z" fill="url(#go)"/><path d="M9 25l8-9c-1-4 2-7 7-6l-3 4 3 3 4-3c0 5-3 8-8 6l-8 9z" fill="#fff" stroke="#222" stroke-width="1.200"/></symbol>

<symbol id="b1" viewBox="0 0 30 30"><g fill="#ddd" stroke="#444"><path d="M1 18 12 11l11 7-11 7z"/><path d="M1 12 12 5l11 7-11 7z"/><path d="M1 7 12 1l11 6-11 6z" fill="url(#gs)"/></g><circle cx="21" cy="21" r="5" fill="#fff" stroke="#333" stroke-width="2.500" stroke-dasharray="2 1"/><circle cx="21" cy="21" r="2" fill="#fff" stroke="#333"/></symbol>
<symbol id="b2" viewBox="0 0 30 30"><use href="#csys"/><path d="M20 12l3 3h-2v4h4v-2l3 3-3 3v-2h-4v4h2l-3 3-3-3h2v-4h-4v2l-3-3 3-3v2h4v-4h-2z" fill="#fff" stroke="#444"/></symbol>
<symbol id="b3" viewBox="0 0 30 30"><path d="M9 2v15" stroke="#4e99b5" stroke-width="1.300"/><path d="M9 17l13-8" stroke="#32b34a" stroke-width="1.300"/><path d="M9 17l13 10" stroke="#ea2f44" stroke-width="1.300"/><circle cx="9" cy="17" r="2.500" fill="#e8821e"/></symbol>
<symbol id="b4" viewBox="0 0 30 30"><use href="#csys"/><path d="M27 13a8 8 0 1 0 1 8" fill="none" stroke="#444" stroke-width="1.300" transform="translate(-2 2)"/><path d="M25 10l1 5-5 0z" fill="#444"/><circle cx="19" cy="22" r="1.300" fill="#444"/></symbol>
<symbol id="b5" viewBox="0 0 30 30"><path d="M5 2v12" stroke="#4e99b5" stroke-width="1.300"/><path d="M5 14l9-6" stroke="#32b34a" stroke-width="1.300"/><path d="M5 14l12 9" stroke="#ea2f44" stroke-width="1.300"/><g transform="translate(8 6) scale(.78)"><use href="#c0"/></g></symbol>
<symbol id="b6" viewBox="0 0 30 30"><use href="#csys"/><text class="svg-000" x="7" y="10">(000)</text></symbol>
<symbol id="b7" viewBox="0 0 30 30"><use href="#csys"/><path d="M12 21c4-5 12-5 16 0-4 5-12 5-16 0z" fill="#fff" stroke="#333" stroke-width="1.200"/><circle cx="20" cy="21" r="3.200" fill="#444"/></symbol>
<symbol id="b8" viewBox="0 0 30 30"><use href="#csys"/><path d="M14 12h12l3 3v14H14z" fill="#fff" stroke="#333" stroke-width="1.300"/><path d="M17 12v5h8v-5M18 22h7M18 25h7" fill="none" stroke="#333"/></symbol>
<symbol id="b9" viewBox="0 0 30 30"><path d="M2 15c6-8 20-8 26 0-6 8-20 8-26 0z" fill="none" stroke="#333" stroke-width="1.300"/><circle cx="15" cy="15" r="5" fill="none" stroke="#333" stroke-width="1.200"/><path d="M3 28 27 2" stroke="#333" stroke-width="1.200"/></symbol>
<symbol id="b10" viewBox="0 0 30 30"><g fill="none" stroke="#444"><path d="M2 9c4-5 12-5 15 0-3 5-11 5-15 0z"/><circle cx="9.500" cy="9" r="3"/></g><path d="M12 21c4-5 12-5 16 0-4 5-12 5-16 0z" fill="#fff" stroke="#444"/><circle cx="20" cy="21" r="4" fill="#444"/><path d="M2 29 28 1" stroke="#333" stroke-width="1.200"/></symbol>
<symbol id="b11" viewBox="0 0 30 30"><path d="M7 2H2v26h5M23 2h5v26h-5" fill="none" stroke="#e8821e" stroke-width="1.500"/><path d="M6 15c4-6 14-6 18 0-4 6-14 6-18 0z" fill="#fff" stroke="#444" stroke-width="1.200"/><circle cx="15" cy="15" r="4" fill="#444"/></symbol>
<symbol id="s1" viewBox="0 0 20 20"><path d="M3 1H1v5h2M3 8H1v5h2M5 1v3H3M5 8v3H3" fill="none" stroke="#333" stroke-width="1.100" transform="translate(1 1)"/><path d="M9 12a4 4 0 0 1 7-2M17 14a4 4 0 0 1-7 2" fill="none" stroke="#555" stroke-width="1.200"/><path d="M14 10h3V7M12 16H9v3" fill="none" stroke="#555"/></symbol>
<symbol id="s2" viewBox="0 0 20 20"><path d="M1 13 8 2c4 2 6 6 9 9l2 4-5 2-8 1z" fill="#d6d6d6" stroke="#888"/><path d="M4 15l6-5 5 4-5 3z" fill="#fff" stroke="#555"/><ellipse cx="6" cy="8" rx="2" ry="3" fill="#777"/></symbol>
<symbol id="s3" viewBox="0 0 14 14"><path d="M1 1h7l3 3v9H1z" fill="none" stroke="#fff" stroke-width="1.600"/><path d="M5 9l7-6" stroke="#fff" stroke-width="1.800"/></symbol>
</defs>
</svg>

<header class="head">
  <div class="qat">
    <span class="nx">NX</span>
    <i class="qs"></i>
    <svg class="q" viewBox="0 0 20 20"><path d="M4 0v16h7" fill="none" stroke="#fff" stroke-width="1.300"/><circle cx="12" cy="8" r="5" fill="#006a90" stroke="#fff" stroke-width="1.300"/><path d="M12 5v6M9 8h6" stroke="#fff"/></svg>
    <svg class="q" viewBox="0 0 20 20"><path d="M3 0v14h14V0M3 5h14M9 5V0" fill="none" stroke="#fff" stroke-width="1.300"/></svg>
    <i class="qs"></i>
    <svg class="q" viewBox="0 0 20 20"><path d="M3 0v14h14V0M6 8h8v6H6zM6 0v4h8V0" fill="none" stroke="#fff" stroke-width="1.300"/></svg>
    <i class="qs"></i>
    <svg class="q" viewBox="0 0 20 20"><path d="M9 14h3c4 0 5-3 5-5s-2-5-5-5H3M6 0 2 4l4 4" fill="none" stroke="#fff" stroke-width="1.300"/></svg>
    <span class="qcar"></span>
    <svg class="q dim" viewBox="0 0 20 20"><path d="M11 14H8c-4 0-5-3-5-5s2-5 5-5h9M14 0l4 4-4 4" fill="none" stroke="#3b8eb0" stroke-width="1.300"/></svg>
    <i class="qs"></i>
    <svg class="q" viewBox="0 0 20 20"><path d="M8 2h10v8M3 6h10v8H3z" fill="none" stroke="#fff" stroke-width="1.300"/></svg>
    <span class="qcar2"></span>
    <span class="wtitle">NX - 建模</span>
    <span class="siemens">SIEMENS</span>
    <span class="wmin"></span>
    <svg class="wrest" viewBox="0 0 14 14"><path d="M4 4V0h9v7h-3M0 4h10v8H0z" fill="none" stroke="#fff" stroke-width="1.400"/></svg>
  </div>
  <div class="tabs-r">
    <span class="rt rt-file">文件(F)</span>
    <span class="rt rt-on">建模</span>
    <span class="rt rt-surf">曲面</span>
    <span class="search"><span class="ph">查找命令</span>
      <svg class="mag" viewBox="0 0 18 18"><circle cx="11" cy="7" r="5.500" fill="none" stroke="#555" stroke-width="1.200"/><path d="M7 11l-5 6" stroke="#555" stroke-width="1.600"/></svg></span>
    <svg class="hic hic-full" viewBox="0 0 18 18"><path d="M1 5V1h4M13 1h4v4M1 13v4h4M17 13v4h-4" fill="none" stroke="#fff" stroke-width="1.300"/></svg>
    <svg class="hic hic-up" viewBox="0 0 18 18"><path d="M1 13 9 5l8 8" fill="none" stroke="#fff" stroke-width="1.400"/></svg>
    <svg class="hic hic-help" viewBox="0 0 18 18"><circle cx="9" cy="9" r="7.500" fill="none" stroke="#fff" stroke-width="1.200"/><text class="svg-q" x="9" y="13">?</text></svg>
  </div>
</header>

<section class="ribbon">
  <div class="grp w245"><div class="gr c7 r2">
    <svg class="i"><use href="#p1"/></svg><svg class="i"><use href="#p2"/></svg><svg class="i"><use href="#p3"/></svg><svg class="i"><use href="#p4"/></svg><svg class="i"><use href="#p5"/></svg><svg class="i"><use href="#p6"/></svg><svg class="i"><use href="#p7"/></svg>
    <svg class="i"><use href="#p8"/></svg><svg class="i"><use href="#p9"/></svg><svg class="i"><use href="#p10"/></svg><svg class="i"><use href="#p11"/></svg><svg class="i"><use href="#p12"/></svg><svg class="i"><use href="#p13"/></svg><svg class="i"><use href="#p14"/></svg>
  </div><div class="gl"><span class="lab">外挂</span><span class="car"></span></div></div>
  <div class="grp w115"><div class="gr c4s r3">
    <svg class="is"><use href="#k1"/></svg><svg class="is"><use href="#k2"/></svg><svg class="is"><use href="#k3"/></svg><svg class="is"><use href="#k4"/></svg>
    <svg class="is"><use href="#k5"/></svg><svg class="is"><use href="#k6"/></svg><svg class="is"><use href="#k7"/></svg><svg class="is"><use href="#k8"/></svg>
    <svg class="is"><use href="#k9"/></svg><svg class="is"><use href="#k10"/></svg><svg class="is"><use href="#k11"/></svg><svg class="is"><use href="#k12"/></svg>
  </div><div class="gl"><span class="lab">曲线</span><span class="car"></span></div></div>
  <div class="grp w277"><div class="gr c8 r2">
    <svg class="i"><use href="#d1"/></svg><svg class="i"><use href="#d2"/></svg><svg class="i"><use href="#d3"/></svg><svg class="i"><use href="#d4"/></svg><svg class="i"><use href="#d5"/></svg><svg class="i"><use href="#d6"/></svg><svg class="i"><use href="#d7"/></svg><svg class="i"><use href="#d8"/></svg>
    <svg class="i"><use href="#d9"/></svg><svg class="i"><use href="#d10"/></svg><svg class="i"><use href="#d11"/></svg><svg class="i"><use href="#d12"/></svg><svg class="i"><use href="#d13"/></svg><svg class="i"><use href="#d14"/></svg><svg class="i"><use href="#d15"/></svg><svg class="i"><use href="#d16"/></svg>
  </div><div class="gl"><span class="lab">派生曲线</span><span class="car"></span></div></div>
  <div class="grp w64"><div class="gr c2s r3">
    <svg class="is"><use href="#e1"/></svg><svg class="is"><use href="#e2"/></svg>
    <svg class="is"><use href="#k1"/></svg><svg class="is"><use href="#k6"/></svg>
    <svg class="is"><use href="#e4"/></svg>
  </div><div class="gl"><span class="lab">草图曲线</span><span class="car"></span></div></div>
  <div class="grp w89"><div class="gr c3s r3">
    <svg class="is"><use href="#f1"/></svg><svg class="is"><use href="#f2"/></svg><svg class="is"><use href="#f3"/></svg>
    <svg class="is"><use href="#f4"/></svg><svg class="is"><use href="#f5"/></svg><svg class="is"><use href="#f6"/></svg>
    <svg class="is"><use href="#f7"/></svg><svg class="is"><use href="#f8"/></svg><svg class="is"><use href="#f9"/></svg>
  </div><div class="gl"><span class="lab">编辑曲线</span><span class="car"></span></div></div>
  <div class="grp w212"><div class="gr c6 r2">
    <svg class="i"><use href="#g1"/></svg><svg class="i"><use href="#g2"/></svg><svg class="i"><use href="#g3"/></svg><svg class="i"><use href="#g4"/></svg><svg class="i"><use href="#g5"/></svg><svg class="i"><use href="#g6"/></svg>
    <svg class="i"><use href="#g7"/></svg><svg class="i"><use href="#g8"/></svg><svg class="i"><use href="#g9"/></svg><svg class="i"><use href="#g10"/></svg><svg class="i"><use href="#g11"/></svg><svg class="i"><use href="#g12"/></svg>
  </div><div class="gl"><span class="lab">设计特征</span><span class="car"></span></div></div>
  <div class="grp w146"><div class="gr c4 r2">
    <svg class="i"><use href="#h1"/></svg><svg class="i"><use href="#h2"/></svg><svg class="i"><use href="#h3"/></svg><svg class="i"><use href="#h4"/></svg>
    <svg class="i"><use href="#h5"/></svg><svg class="i"><use href="#h6"/></svg><svg class="i"><use href="#h7"/></svg><svg class="i"><use href="#h8"/></svg>
  </div><div class="gl"><span class="lab">修剪</span><span class="car"></span></div></div>
  <div class="grp w146"><div class="gr c4 r2">
    <svg class="i"><use href="#j1"/></svg><svg class="i"><use href="#j2"/></svg><svg class="i"><use href="#j3"/></svg><svg class="i"><use href="#j4"/></svg>
    <svg class="i"><use href="#j5"/></svg><svg class="i"><use href="#j6"/></svg><svg class="i"><use href="#j7"/></svg><svg class="i"><use href="#j8"/></svg>
  </div><div class="gl"><span class="lab">组合</span><span class="car"></span></div></div>
  <div class="grp w113"><div class="gr c3 r2">
    <svg class="i"><use href="#l1"/></svg><svg class="i"><use href="#l2"/></svg><svg class="i"><use href="#l3"/></svg>
    <svg class="i"><use href="#l4"/></svg><svg class="i"><use href="#l5"/></svg><svg class="i"><use href="#l6"/></svg>
  </div><div class="gl"><span class="lab">关联复制</span><span class="car"></span></div></div>
  <div class="grp w271"><div class="gr c6t r2">
    <svg class="i"><use href="#m1"/></svg><svg class="i"><use href="#m2"/></svg><svg class="i"><use href="#m3"/></svg><svg class="i"><use href="#m4"/></svg><svg class="i"><use href="#m5"/></svg><svg class="i"><use href="#m6"/></svg>
    <span class="rtext">相关(<u>T</u>)<span class="car car-t"></span></span>
    <svg class="i"><use href="#m7"/></svg><svg class="i"><use href="#m8"/></svg><svg class="i"><use href="#m9"/></svg><svg class="i"><use href="#m10"/></svg><svg class="i"><use href="#m11"/></svg><svg class="i"><use href="#m12"/></svg>
    <span class="rtext">尺寸(<u>D</u>)<span class="car car-t"></span></span>
  </div><div class="gl"><span class="lab">同步建模</span><span class="car"></span></div></div>
  <div class="grp w112"><div class="gr c3 r2">
    <svg class="i"><use href="#n1"/></svg><svg class="i"><use href="#n2"/></svg><svg class="i"><use href="#n3"/></svg>
    <svg class="i"><use href="#n4"/></svg><svg class="i"><use href="#n5"/></svg><svg class="i"><use href="#n6"/></svg>
  </div><div class="gl"><span class="lab">细节特征</span><span class="car"></span></div></div>
  <div class="grp wrest-g"><div class="gr c3 r2">
    <svg class="i"><use href="#q1"/></svg><svg class="i"><use href="#q2"/></svg><svg class="i"><use href="#q3"/></svg>
    <svg class="i"><use href="#q4"/></svg><svg class="i"><use href="#q5"/></svg><svg class="i"><use href="#m3"/></svg>
  </div><div class="gl"><span class="lab">偏执缩放</span><span class="car"></span></div></div>
</section>

<nav class="tool">
  <svg class="burger" viewBox="0 0 20 16"><path d="M3 2h14M3 8h14M3 14h14" stroke="#333" stroke-width="1.200"/></svg>
  <span class="menu">菜单(<u>M</u>)</span>
  <span class="tc w16"><span class="car"></span></span>
  <i class="vs m4"></i>
  <span class="combo w149 m11">无选择过滤器</span>
  <span class="tc w42"><svg class="t"><use href="#t1"/></svg></span>
  <span class="combo w156">整个装配</span>
  <span class="tc w31 hl m5"><svg class="t"><use href="#t2"/></svg></span>
  <span class="tc w34"><svg class="t"><use href="#t3"/></svg></span>
  <span class="tc w14"><span class="car"></span></span>
  <span class="tc w38"><svg class="t"><use href="#t4"/></svg></span>
  <span class="tc w28"><svg class="t"><use href="#t5"/></svg></span>
  <span class="tc w34"><svg class="t"><use href="#t6"/></svg></span>
  <span class="tc w12"><span class="car"></span></span>
  <span class="combo w128 m8">内侧</span>
  <span class="tc w39"><svg class="t"><use href="#t7"/></svg></span>
  <span class="tc w31 hl"><svg class="t"><use href="#t8"/></svg></span>
  <span class="tc w32"><svg class="t"><use href="#t9"/></svg></span>
  <i class="vs m7"></i>
  <span class="tc w30 m12"><svg class="t"><use href="#t10"/></svg></span>
  <span class="tc w10"><span class="car"></span></span>
  <span class="tc w30 m5"><svg class="t"><use href="#t11"/></svg></span>
  <span class="tc w10 m3"><span class="car"></span></span>
  <span class="tc w30 m3"><svg class="t"><use href="#t12"/></svg></span>
  <span class="tc w10 m4"><span class="car"></span></span>
  <span class="tc w30 m6"><svg class="t"><use href="#t13"/></svg></span>
  <span class="tc w10 m3"><span class="car"></span></span>
  <span class="tc w30 m5"><svg class="t"><use href="#t14"/></svg></span>
  <i class="vs m7"></i>
</nav>

<main class="work">
  <div class="col">
    <div class="doc-tabs">
      <span class="dt">
        <svg class="dti"><use href="#s1"/></svg>
        YMS-W170固定座D_step.prt
      </span>
      <span class="dt dt-on">
        <svg class="dti"><use href="#s2"/></svg>
        <span class="dt-name">_model4.prt</span>
        <svg class="dtd"><use href="#s3"/></svg>
        <span class="dtx">✕</span>
      </span>
    </div>
    <div class="view">
      <svg class="canvas" viewBox="0 0 1880 773">
        <g stroke="#fff" stroke-width="1.300">
          <path d="M0 29.500H133M197 29.500H1880"/>
          <path d="M165.500 61V773"/>
        </g>
        <g fill="none" stroke="#b8b8b8" stroke-width="1.100" stroke-dasharray="1 2.600">
          <path d="M114 11Q127 17 133 29"/>
          <path d="M179 11Q192 17 197 29"/>
          <path d="M147 43Q160 49 165 61"/>
          <path d="M.5 11V29"/>
        </g>
        <g>
          <path d="M940 386 C936.500 345 938 335 940 329 C942 335 943.500 345 940 386z" fill="#2f9a35"/>
          <path d="M941 386 C975 389 985 388 997 386 C985 383 975 384 941 386z" fill="#d32f2f"/>
          <circle cx="940" cy="386" r="3" fill="#1446ee"/>
          <text class="t-g" x="945" y="329">YC</text>
          <text class="t-r" x="982" y="382">XC</text>
          <text class="t-b" x="941" y="387">ZC</text>
        </g>
        <g>
          <rect x="83" y="647" width="41" height="42" fill="none" stroke="#8c8c8c" stroke-width="1.500"/>
          <path d="M100.500 647V616H98.500L103.500 597 108.500 616H106.500V647z" fill="#2a9132"/>
          <path d="M125 666H155V663L175 668 155 673V670H125z" fill="#d8343a"/>
          <circle cx="103.500" cy="668" r="5" fill="#1446ee"/>
          <text class="t-y" x="99" y="593">Y</text>
          <text class="t-x" x="180" y="673">X</text>
        </g>
      </svg>
    </div>
  </div>
  <aside class="side">
    <svg class="si"><use href="#f3"/></svg>
    <svg class="si"><use href="#co"/></svg>
    <svg class="si"><use href="#s2"/></svg>
    <svg class="si"><use href="#f3"/></svg>
    <svg class="si"><use href="#s2"/></svg>
    <svg class="si"><use href="#h5"/></svg>
    <svg class="si sg"><circle cx="14" cy="14" r="13" fill="#8c8c8c"/></svg>
    <svg class="si sg"><rect x="1" y="1" width="26" height="26" fill="none" stroke="#333"/><circle cx="9" cy="14" r="6" fill="none" stroke="#127a9c" stroke-width="2"/></svg>
    <svg class="si sg"><circle cx="14" cy="14" r="13" fill="none" stroke="#444"/></svg>
    <svg class="si"><rect x="2" y="0" width="8" height="26" fill="url(#grb)"/></svg>
    <svg class="si"><path d="M2 0h8v18H2z" fill="#4c84e0"/><path d="M0 20l4-4 4 4-4 4z" fill="#e8c628"/></svg>
    <svg class="si"><rect x="1" y="2" width="26" height="24" fill="#fff" stroke="#333"/><path d="M4 12h5M5 18h2" stroke="#333" stroke-width="2"/></svg>
  </aside>
</main>

<footer class="bot">
  <span class="combo w49">1</span>
  <span class="bc m3"><svg class="t"><use href="#b1"/></svg></span>
  <span class="bc"><svg class="t"><use href="#b2"/></svg></span>
  <span class="bc"><svg class="t"><use href="#b3"/></svg></span>
  <span class="bc"><svg class="t"><use href="#b4"/></svg></span>
  <span class="bc"><svg class="t"><use href="#b5"/></svg></span>
  <span class="bc"><svg class="t"><use href="#b6"/></svg></span>
  <span class="tc w31 hl m2"><svg class="t"><use href="#b7"/></svg></span>
  <span class="bc"><svg class="t"><use href="#b8"/></svg></span>
  <span class="bc"><svg class="t"><use href="#b9"/></svg></span>
  <span class="bc"><svg class="t"><use href="#b10"/></svg></span>
  <span class="bc"><svg class="t"><use href="#b11"/></svg></span>
  <i class="vs m4"></i>
</footer>

<div class="wm">
  <svg class="wm-logo" viewBox="0 0 72 82">
    <path d="M36 0 72 20V62L36 82 0 62V20z" fill="#0fa3f6" fill-opacity=".5"/>
    <path d="M36 0 52 9C56 20 56 30 52 40L36 24 6 42 0 36V20z" fill="#dcebf3" fill-opacity=".42"/>
    <path d="M0 36 6 42 12 60 22 72 0 62z" fill="#dcebf3" fill-opacity=".28"/>
    <path d="M36 32 52 40 36 48 20 40z" fill="#6a93a8"/>
    <path d="M20 40 36 48V65L20 56z" fill="#437f9f"/>
    <path d="M52 40 36 48V65L52 56z" fill="#156a94"/>
    <path d="M20 56 36 65 52 56 56 54 36 72 16 54z" fill="#fff" fill-opacity=".95"/>
    <path d="M52 9C58 25 52 50 26 60M0 36C14 25 28 24 40 31M16 30C12 50 18 70 30 78M2 26C12 10 24 6 36 8" fill="none" stroke="#25262b" stroke-width=".7" stroke-opacity=".55"/>
  </svg>
  <span class="wm-t">3D世界网</span>
</div>

<div class="ime">
  <svg class="ime-s" viewBox="0 0 28 14"><path d="M1 6C2 2 18-1 24 0l3 11-1 3H3z" fill="#f56a33"/><path d="M8 8c4-3 9-3 13-2-4 1-8 1-9 2 5 0 9 1 11 3" fill="none" stroke="#fff" stroke-width="2"/></svg>
  <div class="ime-b">
    <span class="ime-c">中</span>
    <svg class="ime-g" viewBox="0 0 170 12"><path d="M12 7l3-3 3 3" stroke="#1b5fb0" fill="none" stroke-width="2"/><circle cx="42" cy="12" r="8" fill="#1b5fb0"/><rect x="71" y="2" width="5" height="10" rx="2.500" fill="#1b5fb0"/><path d="M84 5h15v7H84z" fill="none" stroke="#1b5fb0" stroke-width="2"/><circle cx="114" cy="8" r="4.500" fill="#bbb"/><path d="M130 3l4 2h6l4-2v9h-14z" fill="#1b5fb0"/><path d="M155 3h5v9h-5zM163 3h5v9h-5z" fill="#1b5fb0"/></svg>
  </div>
</div>
</body>
</html>
```
FILE: styles.css
```css
* { box-sizing: border-box; }
html, body { margin: 0; padding: 0; }
body {
  width: 1896px; height: 1016px; overflow: hidden; background: #fff; position: relative;
  display: flex; flex-direction: column;
  font-family: "Noto Sans", "Noto Sans CJK SC", "Liberation Sans", sans-serif;
  font-size: 11px; color: #222;
}
.sprite { position: absolute; width: 0; height: 0; overflow: hidden; }
svg { display: block; flex: none; overflow: hidden; }
i { font-style: normal; }

/* header */
.head { height: 47px; flex: none; overflow: hidden; color: #fff; background: linear-gradient(90deg, #00678e 0%, #026d95 50%, #0478a5 100%); }
.qat { height: 20px; display: flex; align-items: flex-start; }
.nx { font: 700 24px/24px "Liberation Sans", sans-serif; margin: -11px 0 0 3px; width: 38px; letter-spacing: .5px; }
.qs { width: 1px; height: 14px; background: #2a88a8; }
.q { width: 20px; height: 20px; margin: -4px 1px 0 0; }
.qat > .qs { margin: 0 4px 0 4px; }
.qcar, .qcar2 { width: 0; height: 0; border: 3px solid transparent; border-top: 4px solid #fff; margin: 3px 0 0 9px; }
.qcar2 { margin: 1px 0 0 8px; }
.dim { margin-left: 6px; }
.wtitle { margin-left: 733px; font-size: 12px; line-height: 12px; color: #e8f2f6; white-space: nowrap; }
.siemens { margin-left: auto; font: 700 12.500px/12px "Liberation Sans", sans-serif; letter-spacing: .45px; }
.wmin { width: 9px; height: 2px; background: #fff; margin: 9px 11px 0 29px; }
.wrest { width: 14px; height: 12px; margin: -2px 3px 0 0; }

.tabs-r { height: 27px; display: flex; align-items: flex-start; font-size: 13px; }
.rt { line-height: 23px; height: 25px; text-align: center; }
.rt-file { margin-left: 20px; width: 40px; white-space: nowrap; text-align: left; }
.rt-on { width: 58px; margin-left: 26px; color: #f2d27a; border-bottom: 2px solid #f4c142; }
.rt-surf { margin-left: 16px; }
.search { margin: 1px 0 0 auto; width: 129px; height: 22px; background: #fff; border: 1.500px solid #9aa3a8; display: flex; align-items: center; justify-content: space-between; padding-left: 1px; }
.ph { color: #aaa; font-size: 11.500px; }
.mag { width: 18px; height: 18px; margin-right: 1px; }
.hic { width: 18px; height: 18px; margin-top: 4px; }
.hic-full { margin-left: 10px; }
.hic-up { margin-left: 7px; }
.hic-help { margin: 4px 8px 0 8px; }
.svg-q { font: 12px "Liberation Sans", sans-serif; fill: #fff; text-anchor: middle; }

/* ribbon */
.ribbon { height: 94px; flex: none; display: flex; border-bottom: 1px solid #dedede; }
.grp { position: relative; display: flex; flex-direction: column; height: 93px; padding-left: 8px; overflow: hidden; flex: none; }
.grp::after { content: ""; position: absolute; right: 0; top: 5px; bottom: 4px; width: 1px; background: #d6d6d6; }
.w245 { width: 245px; } .w115 { width: 115px; } .w277 { width: 277px; } .w64 { width: 64px; }
.w89 { width: 89px; } .w212 { width: 212px; } .w146 { width: 146px; } .w113 { width: 113px; }
.w271 { width: 271px; } .w112 { width: 112px; } .wrest-g { width: 106px; padding-left: 8px; overflow: visible; }
.wrest-g::after { display: none; }
.gr { display: grid; justify-items: center; align-items: center; }
.r2 { grid-auto-rows: 36px; margin-top: 3px; }
.r3 { grid-auto-rows: 23px; margin-top: 2px; }
.c7 { grid-template-columns: repeat(7, 33px); }
.c8 { grid-template-columns: repeat(8, 33px); }
.c6 { grid-template-columns: repeat(6, 33px); }
.c4 { grid-template-columns: repeat(4, 33px); }
.c3 { grid-template-columns: repeat(3, 33px); }
.c6t { grid-template-columns: repeat(6, 33px) 1fr; }
.c4s { grid-template-columns: repeat(4, 25px); }
.c3s { grid-template-columns: repeat(3, 25px); }
.c2s { grid-template-columns: repeat(2, 25px); }
.i { width: 28px; height: 28px; }
.is { width: 22px; height: 22px; }
.rtext { justify-self: start; display: flex; align-items: center; font-size: 11px; padding-left: 5px; white-space: nowrap; color: #333; }
.gl { margin-top: auto; height: 18px; display: flex; align-items: center; margin-left: -8px; padding-right: 2px; color: #0b7aa8; }
.lab { flex: 1; text-align: center; line-height: 18px; white-space: nowrap; font-size: 11.500px; }
.car { display: block; width: 0; height: 0; border: 3px solid transparent; border-top: 4px solid #222; border-bottom: 0; flex: none; }
.gl .car { margin: 0 6px; }
.car-t { margin-left: 6px; }

/* main toolbar */
.tool { height: 34px; flex: none; display: flex; align-items: center; padding-left: 12px; border-bottom: 1px solid #adadad; }
.burger { width: 20px; height: 16px; }
.menu { margin-left: 6px; width: 40px; white-space: nowrap; color: #222; }
.tc { display: flex; align-items: center; justify-content: center; height: 30px; flex: none; }
.vs { width: 1px; height: 26px; background: #d6d6d6; flex: none; }
.combo { height: 22px; border: 1.500px solid #777; background: #fff; line-height: 19px; padding-left: 3px; position: relative; flex: none; color: #222; }
.combo::after { content: ""; position: absolute; right: 6px; top: 8px; border: 4px solid transparent; border-top: 5px solid #222; border-bottom: 0; }
.hl { background: #cce5ec; outline: 1px solid #a9d0dc; outline-offset: -1px; }
.t { width: 28px; height: 28px; }
.w10 { width: 10px; } .w12 { width: 12px; } .w14 { width: 14px; } .w16 { width: 16px; } .w28 { width: 28px; }
.w30 { width: 30px; } .w31 { width: 31px; } .w32 { width: 32px; } .w34 { width: 34px; } .w38 { width: 38px; }
.w39 { width: 39px; } .w42 { width: 42px; } .w49 { width: 49px; } .w128 { width: 128px; } .w149 { width: 149px; } .w156 { width: 156px; }
.m2 { margin-left: 2px; } .m3 { margin-left: 3px; } .m4 { margin-left: 4px; } .m5 { margin-left: 5px; } .m6 { margin-left: 6px; }
.m7 { margin-left: 7px; } .m8 { margin-left: 8px; } .m11 { margin-left: 11px; } .m12 { margin-left: 12px; }
.svg-lab { font: 9px "Liberation Sans", sans-serif; fill: #333; }
.svg-tex { font: italic 700 12px "Liberation Serif", serif; fill: #6a2a9c; }
.svg-000 { font: 8px "Liberation Sans", sans-serif; fill: #333; }

/* work area */
.work { height: 799px; flex: none; display: flex; }
.col { width: 1881px; flex: none; display: flex; flex-direction: column; }
.doc-tabs { height: 26px; flex: none; display: flex; border-bottom: 2px solid #005f85; }
.dt { display: flex; align-items: center; font-size: 12.300px; white-space: nowrap; color: #222; width: 207px; padding: 0 0 1px 5px; gap: 3px; height: 24px; }
.dt-on { background: #005f85; color: #fff; width: 133px; gap: 0; }
.dti { width: 18px; height: 18px; }
.dt-name { margin-left: 3px; }
.dtd { width: 13px; height: 13px; margin-left: 6px; }
.dtx { font: 700 12px/12px "DejaVu Sans", sans-serif; margin-left: 3px; }
.view { flex: 1; background: #25262b; border-left: 1px solid #fff; overflow: hidden; }
.canvas { width: 1880px; height: 773px; }
.t-g, .t-r, .t-b, .t-y, .t-x { font: 13px "Liberation Sans", sans-serif; }
.t-g { fill: #2f9a35; } .t-r { fill: #c8363a; } .t-b { fill: #2456f0; }
.t-y { fill: #2a8a34; font-size: 12px; } .t-x { fill: #b22f33; font-size: 12px; }
.side { width: 15px; flex: none; background: #dcdcdc; border-left: 8px solid #fff; padding: 42px 0 0 1px; overflow: hidden; display: flex; flex-direction: column; box-shadow: inset 1px 0 0 #c4c4c4; }
.si { width: 28px; height: 28px; margin: 7px 0; }
.si.sg { margin-top: 19px; }

/* bottom bar */
.bot { height: 36px; flex: none; display: flex; align-items: center; padding-left: 10px; border-bottom: 1px solid #adadad; }
.bc { width: 33px; height: 30px; display: flex; align-items: center; justify-content: center; flex: none; }

/* overlays */
.wm { position: absolute; left: 1613px; top: 921px; display: flex; align-items: flex-start; }
.wm-logo { width: 72px; height: 82px; }
.wm-t { font: 700 41px/38px "Liberation Sans", "Noto Sans CJK SC", sans-serif; color: #8a8c8e; margin: 13px 0 0 7px; white-space: nowrap; letter-spacing: .4px; }
.ime { position: absolute; left: 867px; top: 1002px; display: flex; align-items: flex-start; }
.ime-s { width: 28px; height: 14px; }
.ime-b { width: 197px; height: 20px; margin-top: 3px; background: #fff; border: 1px solid #b9c6de; border-radius: 3px; display: flex; padding: 5px 0 0 8px; }
.ime-c { font: 700 14px/14px "Noto Sans CJK SC", sans-serif; color: #1b5fb0; }
.ime-g { width: 170px; height: 12px; margin-left: 1px; }
```
